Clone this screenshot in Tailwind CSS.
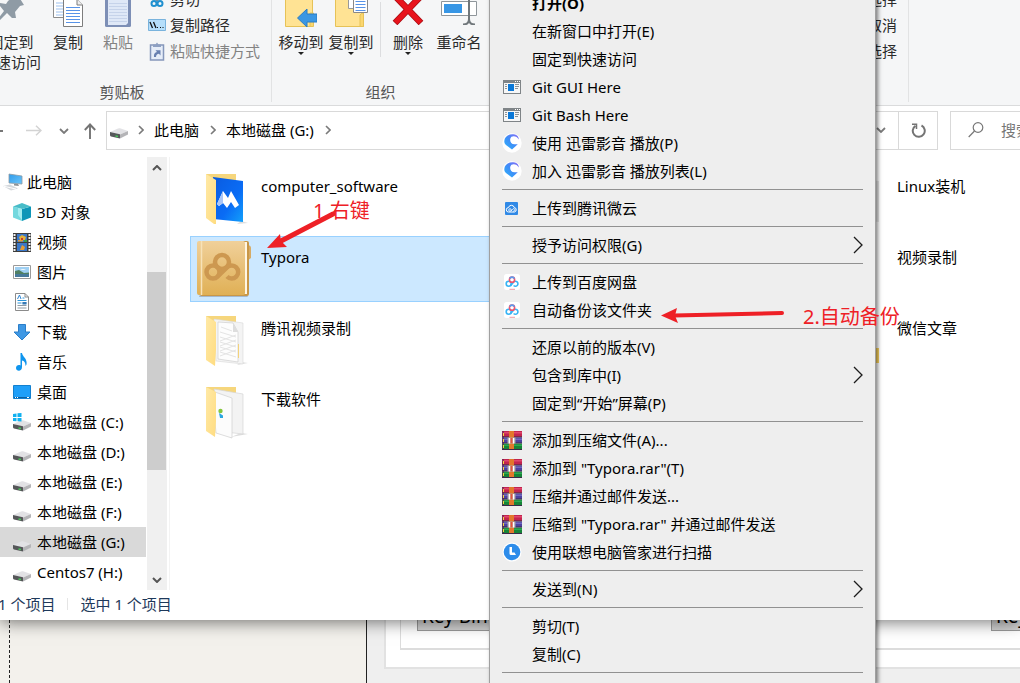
<!DOCTYPE html>
<html lang="zh-CN">
<head>
<meta charset="utf-8">
<meta name="viewport" content="width=device-width, initial-scale=1">
<title>本地磁盘 (G:)</title>
<script src="https://cdn.jsdelivr.net/npm/@tailwindcss/browser@4"></script>
</head>
<body class="relative h-screen overflow-hidden bg-[#efefef] font-['Noto_Sans','Noto_Sans_CJK_SC',sans-serif] text-[15px] leading-5 text-black">

<svg class="absolute h-0 w-0" aria-hidden="true">
  <defs>
    <linearGradient id="gFold" x1="0" y1="0" x2="1" y2="1"><stop offset="0" stop-color="#ffe9a6"/><stop offset="1" stop-color="#ffdc80"/></linearGradient>
    <linearGradient id="gBlue" x1="0" y1="0" x2="1" y2="1"><stop offset="0" stop-color="#0a5be0"/><stop offset=".6" stop-color="#0a6cf5"/><stop offset="1" stop-color="#12a0fb"/></linearGradient>
    <linearGradient id="gBook" x1="0" y1="0" x2="0" y2="1"><stop offset="0" stop-color="#f0d09a"/><stop offset="1" stop-color="#e0b055"/></linearGradient>
    <linearGradient id="gXl" x1="0" y1="1" x2="1" y2="0"><stop offset="0" stop-color="#2fb5fb"/><stop offset=".5" stop-color="#3e8cf7"/><stop offset="1" stop-color="#8d6cf6"/></linearGradient>
    <linearGradient id="gScreen" x1="0" y1="0" x2="1" y2="1"><stop offset="0" stop-color="#2f9bea"/><stop offset="1" stop-color="#6cc6fb"/></linearGradient>
    <symbol id="drive" viewBox="0 0 18 12">
      <path d="M0 5 8 1.5Q9 1 10 1.3L18 4 10 7.5Z" fill="#e2e2e5"/>
      <path d="M10 7.500 18 4V7.500L10 11.500Z" fill="#b4b4b7"/>
      <path d="M0 5 10 7.200V11.500L1 9.500Q0 9 0 8Z" fill="#555759"/>
      <path d="M5.500 8.200 8 8.800V10.300L5.500 9.700Z" fill="#46c85a"/>
    </symbol>
    <symbol id="gitwin" viewBox="0 0 18 14">
      <path d="M0 0H18V14H0Z" fill="#7f8487"/><path d="M1 3H17V13H1Z" fill="#f7f7f7"/>
      <path d="M12 1h1v1h-1zM14 1h1v1h-1zM16 1h1v1h-1z" fill="#fff"/>
      <path d="M5 4H11V11H5Z" fill="#0b78d7"/>
      <path d="M2 4.500h2M2 6.500h2M2 8.500h2M12 4.500h4M12 6.500h4M12 8.500h3" stroke="#8e9396"/>
    </symbol>
    <symbol id="xunlei" viewBox="0 0 20 20">
      <circle cx="10" cy="10" r="9.700" fill="#fff"/>
      <path d="M13 1.500C7 0 2.500 3.500 2.300 8C2.200 10 3 11 4 12L10 16.500L15.800 11.300L12.500 11.200C8 11 7 6 9.500 3.800C12 2.400 15 3.500 17 6.500C16.500 4 15.500 2.300 13 1.500Z" fill="url(#gXl)"/>
    </symbol>
    <symbol id="baidu" viewBox="0 0 16 16">
      <rect width="16" height="16" rx="2.500" fill="#fff"/>
      <circle cx="4.700" cy="9.800" r="2.500" fill="none" stroke="#38b4f5" stroke-width="1.600"/>
      <path d="M6.500 11.600 9.500 8.200A2.500 2.500 0 1 1 9.600 11.500" fill="none" stroke="#38b4f5" stroke-width="1.600"/>
      <circle cx="8" cy="5.700" r="2.600" fill="none" stroke="#f0566d" stroke-width="1.600"/>
      <path d="M5.700 4.600A2.600 2.600 0 0 1 10.400 4.700" fill="none" stroke="#5a9cf0" stroke-width="1.600"/>
      <path d="M5.500 15.300H11" stroke="#ee9aa8"/>
    </symbol>
    <symbol id="rar" viewBox="0 0 20 19">
      <path d="M0 0H20V6H0Z" fill="#c3244f"/><path d="M0 1H20V2.500H0Z" fill="#e0466d"/>
      <path d="M0 6.500H20V12H0Z" fill="#4c41a0"/><path d="M0 7.500H20V9H0Z" fill="#7168c0"/>
      <path d="M0 12.500H20V18H0Z" fill="#168337"/><path d="M0 13.500H20V15H0Z" fill="#2ba951"/>
      <path d="M0 5.500H20V6.500H0ZM0 11.500H20V12.500H0ZM0 18H20V19H0Z" fill="#3b2848"/>
      <path d="M0 0H2V18H0Z" fill="#5b2450" opacity=".6"/><path d="M1.500 2v3M1.500 8v3M1.500 14v3" stroke="#f4d53c"/>
      <path d="M7 0H12V18H7Z" fill="#e2772b"/><path d="M5.500 6.500H13.500V12.500H5.500Z" fill="#aaa5a8"/>
      <path d="M7.500 7V12.500M11.500 7V12.500" stroke="#fff" stroke-width="1.500"/><path d="M8.500 7h2v5h-2z" fill="#e6523b"/>
    </symbol>
    <symbol id="next" viewBox="0 0 10 18"><path d="M1 1 9 9 1 17" fill="none" stroke="#1c1c1c" stroke-width="1.300"/></symbol>
    <symbol id="crumb" viewBox="0 0 6 10"><path d="M1 1 5 5 1 9" fill="none" stroke="#7a7a7a" stroke-width="1.600"/></symbol>
    <symbol id="down" viewBox="0 0 10 6"><path d="M1 1 5 5 9 1" fill="none" stroke="#7a7a7a" stroke-width="1.800"/></symbol>
    <symbol id="tri" viewBox="0 0 6 3"><path d="M0 0H6L3 3Z" fill="#222"/></symbol>
  </defs>
</svg>

<!-- Explorer window -->
<main class="relative z-10 bg-white shadow-[0_2px_16px_rgba(0,0,0,0.55)]">
  <!-- Ribbon -->
  <div class="-mt-[14px] flex h-[120px] overflow-hidden border-b border-[#dadbdc] bg-[#f5f6f7] text-[#2b2b2b]">
    <section class="-ml-[27px] flex w-[298px] shrink-0 flex-col">
      <div class="flex h-[96px] items-start pl-2">
        <button class="flex w-[60px] flex-col items-center whitespace-nowrap">
          <span class="flex h-[46px] items-end pb-[9px]"><svg class="h-8 w-[26px]" viewBox="0 0 26 32"><path d="M10 10 19 3 26 14 22 15 17 21 18 27 14 27 9 22 0 31V28L6 20 2 15 2 12 8 13Z" fill="#8f9ba5"/></svg></span>
          <span>固定到</span><span>快速访问</span>
        </button>
        <button class="ml-1 flex w-[46px] flex-col items-center">
          <span class="flex h-[46px] items-end pb-[5px]"><svg class="h-9 w-[30px]" viewBox="0 0 30 36"><path d="M.5.500H14L19.500 6V26.500H.5Z" fill="#fff" stroke="#8c8c8c"/><path d="M3 12h8M3 15h8M3 18h8M3 21h8M3 24h8" stroke="#9cc0ee"/><path d="M10.500 8.500H24L29.500 14V35.500H10.500Z" fill="#fff" stroke="#7d7d7d"/><path d="M24 8.500V14H29.500" fill="#eee" stroke="#7d7d7d"/><path d="M13 16.500h14M13 19.500h14M13 22.500h14M13 25.500h14M13 28.500h14M13 31.500h14" stroke="#5793e8"/></svg></span>
          <span>复制</span>
        </button>
        <button class="ml-1 flex w-[46px] flex-col items-center text-[#838383]">
          <span class="flex h-[46px] items-end pb-[5px]"><svg class="h-9 w-[26px]" viewBox="0 0 26 36"><rect width="26" height="36" rx="1.500" fill="#7d8fb6"/><path d="M3 4H23V32L21 34H3Z" fill="#dfe8f7"/><path d="M4 12.500h18M4 15.500h18M4 18.500h18M4 21.500h18M4 24.500h18M4 27.500h18M4 30.500h18" stroke="#c6d3ea"/></svg></span>
          <span>粘贴</span>
        </button>
        <div class="ml-[7px] flex flex-col">
          <button class="flex h-[26px] items-center gap-1"><svg class="h-[18px] w-[18px]" viewBox="0 0 18 18"><path d="M6 1 10 11M13 1 8 11" stroke="#7b8b99" stroke-width="1.500"/><circle cx="6" cy="13.500" r="2.500" fill="none" stroke="#2090cf" stroke-width="2"/><circle cx="12" cy="13.500" r="2.500" fill="none" stroke="#2090cf" stroke-width="2"/></svg>剪切</button>
          <button class="flex h-[26px] items-center gap-1"><svg class="h-3 w-[18px]" viewBox="0 0 18 12"><path d="M.5.500H17.500V11.500H.5Z" fill="#b5defa" stroke="#79b3dd"/><path d="M2 3 4.500 9M5.500 3 8 9" stroke="#111" stroke-width="1.300"/><path d="M9 8h1v1H9zM12 8h1v1h-1zM14.500 8h1v1h-1z" fill="#111"/></svg>复制路径</button>
          <button class="flex h-[26px] items-center gap-1 text-[#838383]"><svg class="h-[19px] w-[18px]" viewBox="0 0 18 19"><path d="M2.500 3H15.500V18H2.500Z" fill="#e6edf8" stroke="#8597bb" stroke-width="1.500"/><path d="M5 2.500H7.500L9 .5 10.500 2.500H13V5H5Z" fill="#8ea0c2"/><path d="M6 15C5.500 12 7 10.500 9 10L7.500 8.300H12.500V13.500L11 11.800C9 12 8 13 8 15Z" fill="#6880b0"/></svg>粘贴快捷方式</button>
        </div>
      </div>
      <h2 class="text-center text-[#555]">剪贴板</h2>
    </section>
    <div class="h-[116px] w-px shrink-0 bg-[#e2e3e4]"></div>
    <section class="flex w-[217px] shrink-0 flex-col">
      <div class="flex h-[96px] items-start pl-1">
        <button class="flex w-[50px] flex-col items-center whitespace-nowrap">
          <span class="flex h-[46px] items-end pb-[5px]"><svg class="h-9 w-8" viewBox="0 0 32 36"><path d="M.5 0H27.500V35.500H.5Z" fill="#ffe394" stroke="#e6c257"/><path d="M25 22H28.500V35.500H25Z" fill="#fbd66f" stroke="#e6c257"/><path d="M12.500 27 22 18V23H32V31H22V36Z" fill="#3b97e3" stroke="#2b7cc4"/></svg></span>
          <span>移动到</span><svg class="h-[3px] w-[6px]"><use href="#tri"/></svg>
        </button>
        <button class="flex w-[50px] flex-col items-center whitespace-nowrap">
          <span class="flex h-[46px] items-end pb-[5px]"><svg class="h-9 w-[33px]" viewBox="0 0 33 36"><path d="M.5 0H28.500V35.500H.5Z" fill="#ffe394" stroke="#e6c257"/><path d="M25 24Q28.500 20 28.500 24V35.500H25Z" fill="#fbd66f" stroke="#e6c257"/><path d="M13.500 3H25V17.500H13.500Z" fill="#fff" stroke="#999"/><path d="M18.500 7H32.500V21.500H18.500Z" fill="#fff" stroke="#888"/><path d="M20.500 10.500h10M20.500 13.500h10M20.500 16.500h10M20.500 19.500h10" stroke="#5793e8"/></svg></span>
          <span>复制到</span><svg class="h-[3px] w-[6px]"><use href="#tri"/></svg>
        </button>
        <div class="mt-4 ml-1 h-[55px] w-px bg-[#dcdddf]"></div>
        <button class="ml-1 flex w-[46px] flex-col items-center">
          <span class="flex h-[46px] items-end pb-[7px]"><svg class="h-8 w-8" viewBox="0 0 32 32"><path d="M3 3 29 30M29 3 3 30" stroke="#a80d13" stroke-width="6.500"/><path d="M3.500 3.500 28.500 29.500M28.500 3.500 3.500 29.500" stroke="#e8141c" stroke-width="5"/></svg></span>
          <span>删除</span><svg class="h-[3px] w-[6px]"><use href="#tri"/></svg>
        </button>
        <button class="ml-[3px] flex w-[50px] flex-col items-center whitespace-nowrap">
          <span class="flex h-[46px] items-end pb-[7px]"><svg class="h-8 w-9" viewBox="0 0 36 32"><path d="M.5 8.500H35.500V22.500H.5Z" fill="#fff" stroke="#8f969b"/><path d="M3 11H21V20H3Z" fill="#3796e5"/><path d="M28 0V27M22 31.500C26 31.500 28 29 28 26C28 29 30 31.500 34 31.500" fill="none" stroke="#70777b" stroke-width="2"/></svg></span>
          <span>重命名</span>
        </button>
      </div>
      <h2 class="text-center text-[#555]">组织</h2>
    </section>
    <section class="flex w-[419px] shrink-0 flex-col items-end pr-[11px]">
      <button class="h-[26px]">全部选择</button>
      <button class="h-[26px]">全部取消</button>
      <button class="h-[26px]">反向选择</button>
    </section>
    <div class="h-[116px] w-px shrink-0 bg-[#e2e3e4]"></div>
  </div>

  <!-- Navigation row -->
  <div class="flex h-[51px] items-start pt-[5px]">
    <div class="flex h-[39px] w-[106px] shrink-0 items-center">
      <button aria-label="后退" class="w-[26px]"><svg class="h-3 w-[3px]" viewBox="0 0 3 12"><path d="M0 6H3" stroke="#777" stroke-width="2"/></svg></button>
      <button aria-label="前进"><svg class="h-[11px] w-4" viewBox="0 0 16 11"><path d="M0 5.500H15M10 .8 15 5.500 10 10.200" fill="none" stroke="#d3d3d3" stroke-width="1.500"/></svg></button>
      <button aria-label="最近浏览的位置" class="ml-[17px]"><svg class="h-[6px] w-[10px]"><use href="#down"/></svg></button>
      <button aria-label="上移" class="ml-[15px]"><svg class="h-4 w-3" viewBox="0 0 12 16"><path d="M6 16V2M.8 7 6 1.500 11.200 7" fill="none" stroke="#747474" stroke-width="1.900"/></svg></button>
    </div>
    <nav class="flex h-[39px] flex-1 items-center border border-[#d9d9d9] pb-px pl-[3px]" aria-label="地址">
      <svg class="mt-[6px] h-3 w-[18px]"><use href="#drive"/></svg>
      <svg class="ml-[10px] h-[10px] w-[6px]"><use href="#crumb"/></svg>
      <a href="#" class="ml-[10px]">此电脑</a>
      <svg class="ml-[11px] h-[10px] w-[6px]"><use href="#crumb"/></svg>
      <a href="#" class="ml-[10px]">本地磁盘 (G:)</a>
      <svg class="ml-[11px] h-[10px] w-[6px]"><use href="#crumb"/></svg>
      <button aria-label="以前的位置" class="ml-auto flex h-[37px] w-[36px] items-center justify-center border-r border-[#d9d9d9]"><svg class="h-[6px] w-[10px]"><use href="#down"/></svg></button>
      <button aria-label="刷新" class="flex h-[37px] w-[38px] items-center justify-center"><svg class="h-[15px] w-[15px]" viewBox="0 0 15 15"><path d="M4.500 2.800A6 6 0 1 0 10.500 2.500" fill="none" stroke="#747474" stroke-width="2"/><path d="M1 1.200H5.500V6" fill="none" stroke="#747474" stroke-width="1.500"/></svg></button>
    </nav>
    <label class="ml-3 flex h-[39px] w-[70px] shrink-0 items-center overflow-hidden border border-r-0 border-[#d9d9d9] pb-px pl-[17px]">
      <svg class="h-4 w-4 shrink-0" viewBox="0 0 16 16"><circle cx="10" cy="5.500" r="4.800" fill="none" stroke="#777" stroke-width="1.200"/><path d="M6.500 9 .7 15" stroke="#777" stroke-width="1.200"/></svg>
      <input type="text" aria-label="搜索" placeholder="搜索本地磁盘 (G:)" class="ml-[17px] w-[180px] shrink-0 bg-transparent outline-none placeholder:text-[#777]">
    </label>
  </div>

  <div class="flex h-[433px]">
    <!-- Folder tree -->
    <nav class="w-[146px] shrink-0 overflow-hidden pt-[10px] whitespace-nowrap" aria-label="文件夹">
      <a href="#" class="flex h-[30px] items-center gap-1 pl-[3px]"><svg class="h-[18px] w-5" viewBox="0 0 20 18"><path d="M6 1 19 3V11L6 10Z" fill="url(#gScreen)" stroke="#8d9aa3" stroke-width=".8"/><path d="M11 11h4l1 2-5-.5z" fill="#8d9296"/><path d="M0 13 7 11.500 15 15.500 8 17.500Z" fill="#d4d8dc"/><path d="M1 13.300 13 16" stroke="#fff"/></svg>此电脑</a>
      <a href="#" class="flex h-[30px] items-center gap-[6px] pl-[13px]"><svg class="h-[18px] w-[18px]" viewBox="0 0 18 18"><path d="M0 3.500 9 6V18L0 14.500Z" fill="#74d8de"/><path d="M9 6 18 3.500V14.500L9 18Z" fill="#0e96b8"/><path d="M0 3.500 9 0 18 3.500 9 6Z" fill="#48bcc8"/><path d="M5 4.800 9 6V17L5 12Z" fill="#a2ebef"/></svg>3D 对象</a>
      <a href="#" class="flex h-[30px] items-center gap-[6px] pl-[13px]"><svg class="h-[19px] w-[18px]" viewBox="0 0 18 19"><path d="M0 0H18V19H0Z" fill="#3d3d3d"/><path d="M1.500 1V19M16.500 1V19" stroke="#f3f3f3" stroke-width="2" stroke-dasharray="2 1"/><path d="M4 1H14V9H4ZM4 10H14V18H4Z" fill="#3b78c8"/><path d="M6 4 9 2 13 4 12 7 7 7Z" fill="#e2b13b"/><path d="M5 7h5v1.500H5zM9 12l3 2-1 3H7z" fill="#e39b34"/><path d="M11 7h3v2h-3z" fill="#39a048"/><path d="M8 5h2v2H8z" fill="#c8372c"/></svg>视频</a>
      <a href="#" class="flex h-[30px] items-center gap-[6px] pl-[13px]"><svg class="h-[14px] w-[18px]" viewBox="0 0 18 14"><path d="M.5.500H17.500V13.500H.5Z" fill="#fff" stroke="#9a9a9a"/><path d="M2 2H16V12H2Z" fill="#9fd0f3"/><path d="M2 6 6 5 11 8 16 7.500V9H2Z" fill="#4f7f63"/><path d="M2 9H16V12H2Z" fill="#46799b"/><path d="M7 5q3-2 6 0z" fill="#f1f8fc"/></svg>图片</a>
      <a href="#" class="flex h-[30px] items-center gap-[6px] pl-[13px]"><svg class="h-[18px] w-[18px]" viewBox="0 0 18 18"><path d="M2.500.500H12L15.500 4V17.500H2.500Z" fill="#fff" stroke="#8b8b8b"/><path d="M12 .5V4H15.500" fill="none" stroke="#8b8b8b"/><path d="M4.500 6 6.500 2 8 6" fill="none" stroke="#2c85d4"/><path d="M9.500 5h2M4.500 7.500h9M4.500 10h4M9.500 10h4" stroke="#2c95d9"/><path d="M4.500 12.500h9M4.500 15h9" stroke="#8d9ba5"/><path d="M9.500 9h4v2.500h-4z" fill="#3579b5"/></svg>文档</a>
      <a href="#" class="flex h-[30px] items-center gap-[6px] pl-[13px]"><svg class="h-[17px] w-[18px]" viewBox="0 0 18 17"><path d="M5.500.500H12.500V8H17L9 16 1 8H5.500Z" fill="#3f98e4" stroke="#2b7ec9"/></svg>下载</a>
      <a href="#" class="flex h-[30px] items-center gap-[6px] pl-[13px]"><svg class="h-[18px] w-[18px]" viewBox="0 0 18 18"><path d="M9 0C9.500 4 14.500 5 13.500 11.500L12.500 13C12.500 9.500 11.500 8 9 7.500V14C9 19 3 18.500 3 15C3 12.500 5.500 11.500 7.500 12.500V0Z" fill="#0f95ee"/></svg>音乐</a>
      <a href="#" class="flex h-[30px] items-center gap-[6px] pl-[13px]"><svg class="h-[14px] w-[18px]" viewBox="0 0 18 14"><path d="M.5.500H17.500V13.500H.5Z" fill="#1f9ff8" stroke="#1380cf"/><path d="M1 12.500H17" stroke="#0d5f9f"/><path d="M2 12h1v1H2zM4 12h1v1H4zM14 12h2v1h-2z" fill="#fff"/></svg>桌面</a>
      <a href="#" class="flex h-[30px] items-center gap-[6px] pl-[13px]"><svg class="h-[18px] w-[18px]" viewBox="0 0 18 18"><use href="#drive" y="6" width="18" height="12"/><path d="M0 1 3.500.5V4H0ZM4.500.300 8.500 0V4H4.500ZM0 5H3.500V8.300L0 8ZM4.500 5H8.500V8.500L4.500 8.300Z" fill="#10b1f0"/></svg>本地磁盘 (C:)</a>
      <a href="#" class="flex h-[30px] items-center gap-[6px] pl-[13px]"><svg class="mt-2 h-3 w-[18px]"><use href="#drive"/></svg>本地磁盘 (D:)</a>
      <a href="#" class="flex h-[30px] items-center gap-[6px] pl-[13px]"><svg class="mt-2 h-3 w-[18px]"><use href="#drive"/></svg>本地磁盘 (E:)</a>
      <a href="#" class="flex h-[30px] items-center gap-[6px] pl-[13px]"><svg class="mt-2 h-3 w-[18px]"><use href="#drive"/></svg>本地磁盘 (F:)</a>
      <a href="#" aria-current="page" class="flex h-[30px] items-center gap-[6px] bg-[#d9d9d9] pl-[13px]"><svg class="mt-2 h-3 w-[18px]"><use href="#drive"/></svg>本地磁盘 (G:)</a>
      <a href="#" class="flex h-[30px] items-center gap-[6px] pl-[13px]"><svg class="mt-2 h-3 w-[18px]"><use href="#drive"/></svg>Centos7 (H:)</a>
    </nav>
    <div class="ml-px flex w-5 shrink-0 flex-col bg-[#f0f0f0]">
      <button aria-label="向上滚动" class="flex h-[21px] items-center justify-center"><svg class="h-[6px] w-[10px]" viewBox="0 0 10 6"><path d="M1 5 5 1 9 5" fill="none" stroke="#555" stroke-width="2"/></svg></button>
      <div class="mt-[94px] mr-px h-[198px] bg-[#cdcdcd]"></div>
      <button aria-label="向下滚动" class="mt-auto flex h-[21px] items-center justify-center"><svg class="h-[6px] w-[10px]" viewBox="0 0 10 6"><path d="M1 1 5 5 9 1" fill="none" stroke="#555" stroke-width="2"/></svg></button>
    </div>
    <div class="ml-[2px] w-px shrink-0 bg-[#f3f3f3]"></div>

    <!-- Files -->
    <ul class="ml-5 grid flex-1 grid-cols-[310px_310px_1fr] content-start gap-x-2 gap-y-[5px] overflow-hidden pt-2">
      <li class="flex h-[66px] border border-transparent pl-[14px]">
        <svg class="mt-[7px] h-[54px] w-[44px] shrink-0" viewBox="0 0 44 54"><path d="M36 48 43 50 32 51Z" fill="#ddd"/><path d="M1 1H31V20H1Z" fill="#f6d67c"/><path d="M8 4 38 8V49L8 46Z" fill="url(#gBlue)"/><path d="M12 31 18 18 23 25 26 18 34 32 30 35 26 29 22 35 18 30 14 33Z" fill="#fff"/><path d="M12 31 18 18 18 30 14 33Z" fill="#a9c5f7"/><path d="M1 1 11 7V51L9 51 1 45Z" fill="url(#gFold)"/></svg>
        <span class="ml-3 pt-[10px]">computer_software</span>
      </li>
      <li class="col-start-3 flex h-[66px] border border-transparent pl-[14px]">
        <svg class="mt-[7px] h-[54px] w-[40px] shrink-0" viewBox="0 0 40 54"><path d="M1 1H31V20H1Z" fill="#f6d67c"/><path d="M10 5 38 8V49L10 46Z" fill="#e8e8e8"/><path d="M1 1 11 7V51L1 45Z" fill="url(#gFold)"/></svg>
        <span class="ml-4 pt-[10px] whitespace-nowrap">Linux装机</span>
      </li>
      <li class="flex h-[66px] border border-[#99d1ff] bg-[#cce8ff] pl-[6px]">
        <svg class="mt-[3px] h-[58px] w-[54px] shrink-0" viewBox="0 0 54 58"><path d="M50 5Q54 5 54 8V18Q52 20 50 20Z" fill="#d6ab66"/><path d="M3 54H49L51 57H2Z" fill="#7d8897" opacity=".5"/><rect x="3" y="1" width="49" height="55" rx="2" fill="#c99747"/><path d="M46 2h4v52h-4z" fill="#fff6e3"/><rect y="1" width="48" height="54" rx="2" fill="url(#gBook)"/><path d="M4.500 1V55" stroke="#f7e2b8" stroke-width="1.500"/><g fill="none" stroke="#cd9850" stroke-width="4.500"><circle cx="25" cy="22" r="7"/><circle cx="16" cy="32" r="6.500"/><path d="M21 36 30 27.500A6.500 6.500 0 1 1 30 36.500"/></g></svg>
        <span class="ml-[10px] pt-[10px]">Typora</span>
      </li>
      <li class="col-start-3 flex h-[66px] border border-transparent pl-[70px]"><span class="pt-[10px] whitespace-nowrap">视频录制</span></li>
      <li class="flex h-[66px] border border-transparent pl-[14px]">
        <svg class="mt-[7px] h-[54px] w-[44px] shrink-0" viewBox="0 0 44 54"><path d="M36 47 43 48 32 50Z" fill="#ddd"/><path d="M1 1H31V20H1Z" fill="#f6d67c"/><path d="M9 4 38 8V49L11 46Z" fill="#f4f4f4" stroke="#d9d9d9" stroke-width=".6"/><path d="M13 7 28 8 33 17V47L13 44Z" fill="#fdfdfd" stroke="#cfcfcf" stroke-width=".7"/><path d="M16 12 27 16M15 17 31 22M15 22 31 27M15 27 31 32M15 32 31 37M15 37 31 42M31 20 15 26M31 25 15 31M31 30 15 36M31 35 15 41" stroke="#e4e4e4" stroke-width="1"/><path d="M28 8V17H33Z" fill="#ddd"/><path d="M33.500 29V43" stroke="#f3d27a"/><path d="M1 1 11 7V35L10 51 1 45Z" fill="url(#gFold)"/></svg>
        <span class="ml-3 pt-[10px]">腾讯视频录制</span>
      </li>
      <li class="col-start-3 flex h-[66px] border border-transparent pl-[14px]">
        <svg class="mt-[7px] h-[54px] w-[40px] shrink-0" viewBox="0 0 40 54"><path d="M1 1H31V20H1Z" fill="#f6d67c"/><path d="M8 4 34 8V33H38V48H8Z" fill="#fbd45f"/><path d="M1 1 11 7V51L1 45Z" fill="url(#gFold)"/></svg>
        <span class="ml-4 pt-[10px] whitespace-nowrap">微信文章</span>
      </li>
      <li class="flex h-[66px] border border-transparent pl-[14px]">
        <svg class="mt-[7px] h-[54px] w-[44px] shrink-0" viewBox="0 0 44 54"><path d="M36 47 43 48 26 51Z" fill="#ddd"/><path d="M1 1H31V20H1Z" fill="#f6d67c"/><path d="M9 3 38 8V48L20 46Z" fill="#f3f3f3" stroke="#d6d6d6" stroke-width=".7"/><path d="M7 5 27 12V52L11 47Z" fill="#fcfcfc" stroke="#cfcfcf" stroke-width=".7"/><circle cx="15.500" cy="25" r="2.200" fill="#85c63b"/><path d="M14 27 18 29.500V32H15Z" fill="#2aa7e0"/><path d="M1 1 11 6V35L10 51 1 45Z" fill="url(#gFold)"/></svg>
        <span class="ml-3 pt-[10px]">下载软件</span>
      </li>
    </ul>
  </div>

  <footer class="flex h-[30px] items-center pb-[2px] text-[#1e395b]">
    <span class="-ml-[2px]">1 个项目</span>
    <span class="ml-3 h-3 w-px bg-[#e5e5e5]"></span>
    <span class="ml-3">选中 1 个项目</span>
  </footer>
</main>

<!-- Application behind the explorer -->
<section class="-mt-5 flex h-[83px]">
  <div class="w-[366px] shrink-0 bg-[#f3f1ec] pl-[9px]"><div class="h-full border-l border-dashed border-[#222]"></div></div>
  <div class="w-px shrink-0 bg-[#222]"></div>
  <div class="ml-[17px] h-[69px] flex-1 border-b-2 border-l-2 border-[#e2e2e2] bg-white pl-[14px]">
    <div class="flex h-[50px] items-start justify-between overflow-hidden border-b-2 border-l border-[#dcdcdc] pl-4">
      <button class="h-[31px] w-[140px] border border-[#999] bg-[#d2d2d2] pl-1 text-left text-[19px] leading-7">Key Bindings</button>
      <button class="-mr-[91px] h-[31px] w-[120px] border border-[#999] bg-[#d2d2d2] pl-1 text-left text-[19px] leading-7">Key Map</button>
    </div>
  </div>
</section>

<!-- Context menu -->
<div role="menu" class="absolute -top-[11px] bottom-0 left-[489px] z-20 flex w-[387px] flex-col border-r border-l border-[#a0a0a0] bg-[#eee] px-3 shadow-[2px_2px_4px_rgba(0,0,0,0.5)]">
  <button role="menuitem" class="flex h-7 shrink-0 items-center pl-[30px] font-bold">打开(O)</button>
  <button role="menuitem" class="flex h-7 shrink-0 items-center pl-[30px]">在新窗口中打开(E)</button>
  <button role="menuitem" class="flex h-7 shrink-0 items-center pl-[30px]">固定到快速访问</button>
  <button role="menuitem" class="flex h-7 shrink-0 items-center"><span class="flex w-[30px] pl-px"><svg class="h-[14px] w-[18px]"><use href="#gitwin"/></svg></span>Git GUI Here</button>
  <button role="menuitem" class="flex h-7 shrink-0 items-center"><span class="flex w-[30px] pl-px"><svg class="h-[14px] w-[18px]"><use href="#gitwin"/></svg></span>Git Bash Here</button>
  <button role="menuitem" class="flex h-7 shrink-0 items-center"><span class="flex w-[30px]"><svg class="h-5 w-5"><use href="#xunlei"/></svg></span>使用 迅雷影音 播放(P)</button>
  <button role="menuitem" class="flex h-7 shrink-0 items-center"><span class="flex w-[30px]"><svg class="h-5 w-5"><use href="#xunlei"/></svg></span>加入 迅雷影音 播放列表(L)</button>
  <hr class="my-1 border-[#919191]">
  <button role="menuitem" class="flex h-7 shrink-0 items-center"><span class="flex w-[30px] pl-[3px]"><svg class="h-[13px] w-[13px]" viewBox="0 0 13 13"><rect width="13" height="13" rx="1" fill="#3089e6"/><path d="M3.500 10A2.200 2.200 0 0 1 3.500 5.600A3 3 0 0 1 9.300 5.500A2.300 2.300 0 0 1 9.500 10Z" fill="none" stroke="#fff"/><circle cx="5" cy="8" r="1.300" fill="none" stroke="#fff" stroke-width=".8"/><path d="M6 9 8 6.800A1.300 1.300 0 1 1 8 9" fill="none" stroke="#fff" stroke-width=".8"/></svg></span>上传到腾讯微云</button>
  <hr class="my-1 border-[#919191]">
  <button role="menuitem" class="flex h-7 shrink-0 items-center justify-between pl-[30px]">授予访问权限(G)<svg class="h-[18px] w-[10px]"><use href="#next"/></svg></button>
  <hr class="my-1 border-[#919191]">
  <button role="menuitem" class="flex h-7 shrink-0 items-center"><span class="flex w-[30px] pl-[2px]"><svg class="h-4 w-4"><use href="#baidu"/></svg></span>上传到百度网盘</button>
  <button role="menuitem" class="flex h-7 shrink-0 items-center"><span class="flex w-[30px] pl-[2px]"><svg class="h-4 w-4"><use href="#baidu"/></svg></span>自动备份该文件夹</button>
  <hr class="my-1 border-[#919191]">
  <button role="menuitem" class="flex h-7 shrink-0 items-center pl-[30px]">还原以前的版本(V)</button>
  <button role="menuitem" class="flex h-7 shrink-0 items-center justify-between pl-[30px]">包含到库中(I)<svg class="h-[18px] w-[10px]"><use href="#next"/></svg></button>
  <button role="menuitem" class="flex h-7 shrink-0 items-center pl-[30px]">固定到“开始”屏幕(P)</button>
  <hr class="my-1 border-[#919191]">
  <button role="menuitem" class="flex h-7 shrink-0 items-center"><span class="flex w-[30px]"><svg class="h-[19px] w-5"><use href="#rar"/></svg></span>添加到压缩文件(A)...</button>
  <button role="menuitem" class="flex h-7 shrink-0 items-center"><span class="flex w-[30px]"><svg class="h-[19px] w-5"><use href="#rar"/></svg></span>添加到 "Typora.rar"(T)</button>
  <button role="menuitem" class="flex h-7 shrink-0 items-center"><span class="flex w-[30px]"><svg class="h-[19px] w-5"><use href="#rar"/></svg></span>压缩并通过邮件发送...</button>
  <button role="menuitem" class="flex h-7 shrink-0 items-center"><span class="flex w-[30px]"><svg class="h-[19px] w-5"><use href="#rar"/></svg></span>压缩到 "Typora.rar" 并通过邮件发送</button>
  <button role="menuitem" class="flex h-7 shrink-0 items-center"><span class="flex w-[30px]"><svg class="h-5 w-5" viewBox="0 0 20 20"><circle cx="10" cy="10" r="9.500" fill="#fff"/><circle cx="10" cy="10" r="8.300" fill="#2d8cea"/><path d="M7.500 5V11.500Q7.500 13 9 13H14L12.500 10.500H10V5Z" fill="#fff"/></svg></span>使用联想电脑管家进行扫描</button>
  <hr class="my-1 border-[#919191]">
  <button role="menuitem" class="flex h-7 shrink-0 items-center justify-between pl-[30px]">发送到(N)<svg class="h-[18px] w-[10px]"><use href="#next"/></svg></button>
  <hr class="my-1 border-[#919191]">
  <button role="menuitem" class="flex h-7 shrink-0 items-center pl-[30px]">剪切(T)</button>
  <button role="menuitem" class="flex h-7 shrink-0 items-center pl-[30px]">复制(C)</button>
  <hr class="my-1 border-[#919191]">
</div>

<!-- Annotations -->
<p class="absolute top-[199px] left-[313px] z-30 text-[20px] leading-6 whitespace-nowrap text-[#ee2026]">1 右键</p>
<svg class="absolute top-[208px] left-[264px] z-30 h-[42px] w-[74px]" viewBox="0 0 74 42"><path d="M69 6 17 33" stroke="#ee2026" stroke-width="5" stroke-linecap="round"/><path d="M3 40 16 26 17 33 23 39Z" fill="#ee2026"/></svg>
<svg class="absolute top-[306px] left-[660px] z-30 h-[18px] w-[126px]" viewBox="0 0 126 18"><path d="M14 9.500 122 7" stroke="#ee2026" stroke-width="4" stroke-linecap="round"/><path d="M1 9.500 17 2 15 9.500 18 17Z" fill="#ee2026"/></svg>
<p class="absolute top-[305px] left-[803px] z-30 text-[20px] leading-6 whitespace-nowrap text-[#ee2026]">2.自动备份</p>
</body>
</html>
